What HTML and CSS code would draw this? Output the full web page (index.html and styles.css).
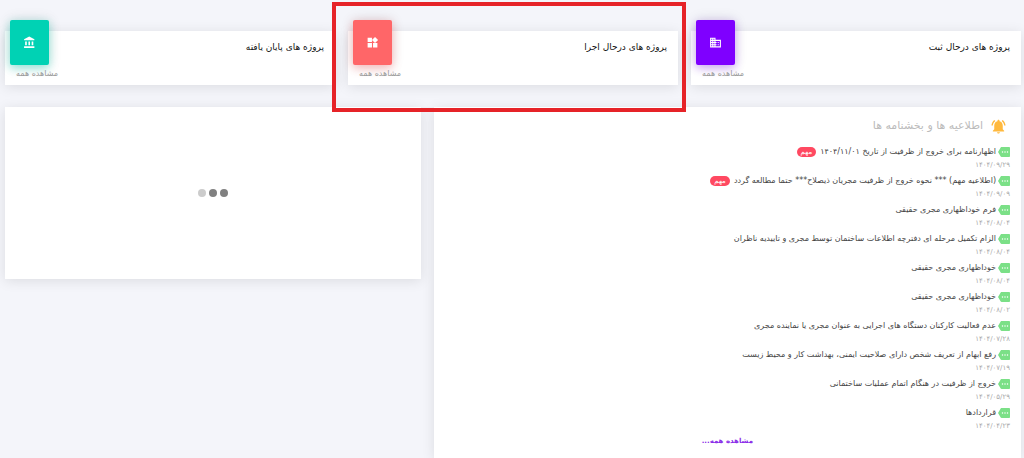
FILE: index.html
```html
<!DOCTYPE html>
<html lang="fa" dir="rtl">
<head>
  <meta charset="UTF-8" />
  <meta name="viewport" content="width=device-width, initial-scale=1.0"/>
  <title>پروژه ها</title>
  <link rel="stylesheet" href="styles.css">
</head>
<body>
  <main class="dashboard">
    <section class="card stat">
      <h2>پروژه های درحال ثبت</h2>
      <div class="stat-side">
        <div class="tile purple">
          <svg viewBox="0 0 24 24"><path d="M12 7V3H2v18h20V7H12zM6 19H4v-2h2v2zm0-4H4v-2h2v2zm0-4H4V9h2v2zm0-4H4V5h2v2zm4 12H8v-2h2v2zm0-4H8v-2h2v2zm0-4H8V9h2v2zm0-4H8V5h2v2zm10 12h-8v-2h2v-2h-2v-2h2v-2h-2V9h8v10zm-2-8h-2v2h2v-2zm0 4h-2v2h2v-2z"/></svg>
        </div>
        <a href="#">مشاهده همه</a>
      </div>
    </section>

    <section class="card stat highlighted">
      <h2>پروژه های درحال اجرا</h2>
      <div class="stat-side">
        <div class="tile red">
          <svg viewBox="0 0 24 24"><path d="M13 13v8h8v-8h-8zM3 21h8v-8H3v8zM3 3v8h8V3H3zm13.66-1.31L11 7.34 16.66 13l5.66-5.66-5.66-5.65z"/></svg>
        </div>
        <a href="#">مشاهده همه</a>
      </div>
    </section>

    <section class="card stat">
      <h2>پروژه های پایان یافته</h2>
      <div class="stat-side">
        <div class="tile green">
          <svg viewBox="0 0 24 24"><path d="M4 10v7h3v-7H4zm6 0v7h3v-7h-3zM2 22h19v-3H2v3zm14-12v7h3v-7h-3zm-4.5-9L2 6v2h19V6l-9.5-5z"/></svg>
        </div>
        <a href="#">مشاهده همه</a>
      </div>
    </section>

    <section class="card news">
      <h3>
        <svg viewBox="0 0 24 24"><path d="M7.58 4.08L6.15 2.65C3.75 4.48 2.17 7.3 2.03 10.5h2c.15-2.65 1.51-4.97 3.55-6.42zm12.39 6.42h2c-.15-3.2-1.73-6.02-4.12-7.85l-1.42 1.43c2.02 1.45 3.39 3.77 3.54 6.42zM18 11c0-3.07-1.64-5.64-4.5-6.32V4c0-.83-.67-1.5-1.5-1.5s-1.5.67-1.5 1.5v.68C7.63 5.36 6 7.92 6 11v5l-2 2v1h16v-1l-2-2v-5zm-6 11c.14 0 .27-.01.4-.04.65-.14 1.18-.58 1.44-1.18.1-.24.15-.5.15-.78h-4c.01 1.1.9 2 2.01 2z"/></svg>
        اطلاعیه ها و بخشنامه ها
      </h3>

      <svg class="hidden">
        <symbol id="more" viewBox="0 0 24 24"><path d="M22 2H7c-.69 0-1.23.35-1.59.88L0 12l5.41 9.11c.36.53.97.89 1.66.89H22c1.1 0 2-.9 2-2V4c0-1.1-.9-2-2-2zM9 13.5a1.5 1.5 0 1 1 0-3 1.5 1.5 0 0 1 0 3zm5 0a1.5 1.5 0 1 1 0-3 1.5 1.5 0 0 1 0 3zm5 0a1.5 1.5 0 1 1 0-3 1.5 1.5 0 0 1 0 3z"/></symbol>
      </svg>

      <ul>
        <li>
          <a href="#"><svg><use href="#more"/></svg>اظهارنامه برای خروج از ظرفیت از تاریخ ۱۴۰۴/۱۱/۰۱ <span class="badge">مهم</span></a>
          <time>۱۴۰۴/۰۹/۲۹</time>
        </li>
        <li>
          <a href="#"><svg><use href="#more"/></svg>(اطلاعیه مهم) *** نحوه خروج از ظرفیت مجریان ذیصلاح*** حتما مطالعه گردد <span class="badge">مهم</span></a>
          <time>۱۴۰۴/۰۹/۰۹</time>
        </li>
        <li>
          <a href="#"><svg><use href="#more"/></svg>فرم خوداظهاری مجری حقیقی</a>
          <time>۱۴۰۴/۰۸/۰۴</time>
        </li>
        <li>
          <a href="#"><svg><use href="#more"/></svg>الزام تکمیل مرحله ای دفترچه اطلاعات ساختمان توسط مجری و تاییدیه ناظران</a>
          <time>۱۴۰۴/۰۸/۰۴</time>
        </li>
        <li>
          <a href="#"><svg><use href="#more"/></svg>خوداظهاری مجری حقیقی</a>
          <time>۱۴۰۴/۰۸/۰۴</time>
        </li>
        <li>
          <a href="#"><svg><use href="#more"/></svg>خوداظهاری مجری حقیقی</a>
          <time>۱۴۰۴/۰۸/۰۲</time>
        </li>
        <li>
          <a href="#"><svg><use href="#more"/></svg>عدم فعالیت کارکنان دستگاه های اجرایی به عنوان مجری یا نماینده مجری</a>
          <time>۱۴۰۴/۰۷/۲۸</time>
        </li>
        <li>
          <a href="#"><svg><use href="#more"/></svg>رفع ابهام از تعریف شخص دارای صلاحیت ایمنی، بهداشت کار و محیط زیست</a>
          <time>۱۴۰۴/۰۷/۱۹</time>
        </li>
        <li>
          <a href="#"><svg><use href="#more"/></svg>خروج از ظرفیت در هنگام اتمام عملیات ساختمانی</a>
          <time>۱۴۰۴/۰۵/۲۹</time>
        </li>
        <li>
          <a href="#"><svg><use href="#more"/></svg>قراردادها</a>
          <time>۱۴۰۴/۰۴/۲۳</time>
        </li>
      </ul>
      <a href="#" class="more-link">مشاهده همه...</a>
    </section>

    <section class="card loading">
      <span class="dot"></span>
      <span class="dot"></span>
      <span class="dot light"></span>
    </section>
  </main>
</body>
</html>
```
FILE: styles.css
```css
* {
  box-sizing: border-box;
}

body {
  margin: 0;
  background: #f4f5fa;
  font-family: 'DejaVu Sans', sans-serif;
  font-size: 8px;
  color: #444;
}

a {
  color: inherit;
  text-decoration: none;
}

h2, h3, ul {
  margin: 0;
  padding: 0;
}

.dashboard {
  display: grid;
  grid-template-columns: repeat(12, 1fr);
  grid-template-rows: auto 1fr;
  align-items: start;
  column-gap: 13px;
  row-gap: 22px;
  min-height: 100vh;
  padding: 31px 3px 0 5px;
}

.card {
  background: white;
  box-shadow: 0 2px 12px rgba(0, 0, 0, 0.1);
}

/* top boxes */
.stat {
  grid-column: span 4;
  display: flex;
  justify-content: space-between;
  height: 54px;
  padding: 0 11px 0 5px;
}

.stat h2 {
  padding-top: 8px;
  font-size: 9px;
  font-weight: normal;
  line-height: 16px;
  color: #111;
}

.stat-side {
  display: flex;
  flex-direction: column;
  align-items: flex-end;
  margin-top: -11px;
}

.stat-side a {
  margin-left: 6px;
  line-height: 18px;
  color: #999;
}

.tile {
  display: flex;
  align-items: center;
  justify-content: center;
  width: 39px;
  height: 45px;
  border-radius: 2px;
}

.tile svg {
  width: 13px;
  height: 13px;
  fill: white;
}

.purple {
  background: #7f00ff;
  box-shadow: 0 3px 10px rgba(127, 0, 255, 0.3), 0 0 14px rgba(0, 0, 0, 0.12);
}

.red {
  background: #ff6668;
  box-shadow: 0 3px 10px rgba(255, 102, 104, 0.4), 0 0 14px rgba(0, 0, 0, 0.12);
}

.green {
  background: #00d2b4;
  box-shadow: 0 3px 10px rgba(0, 210, 180, 0.4), 0 0 14px rgba(0, 0, 0, 0.12);
}

.highlighted {
  position: relative;
}

.highlighted::after {
  content: "";
  position: absolute;
  inset: -29px -8px -27px -16px;
  border: 4px solid #e62328;
  pointer-events: none;
}

/* news list */
.news {
  grid-column: span 7;
  align-self: stretch;
  padding: 10px 11px 8px;
}

.news h3 {
  display: flex;
  align-items: center;
  gap: 7px;
  margin-bottom: 9px;
  padding-right: 3px;
  font-size: 11px;
  font-weight: normal;
  line-height: 18px;
  color: #bbb;
}

.news h3 svg {
  width: 17px;
  height: 17px;
  fill: #ffb93e;
}

.news ul {
  list-style: none;
}

.news li {
  height: 29px;
}

.news li a {
  display: flex;
  align-items: center;
  gap: 2px;
  line-height: 16px;
}

.news li svg {
  width: 12px;
  height: 12px;
  fill: #7be087;
}

.news time {
  display: block;
  font-size: 7px;
  line-height: 10px;
  color: #aaa;
}

.badge {
  margin-right: 2px;
  padding: 0 4px;
  border-radius: 5px;
  background: #ff4961;
  color: white;
  font-size: 7px;
  line-height: 10px;
}

.more-link {
  display: block;
  text-align: center;
  font-size: 7px;
  font-weight: bold;
  line-height: 14px;
  color: #8a2be8;
}

/* loading box */
.loading {
  grid-column: span 5;
  display: flex;
  align-items: center;
  justify-content: center;
  gap: 3px;
  height: 172px;
}

.dot {
  width: 8px;
  height: 8px;
  border-radius: 50%;
  background: #808080;
}

.dot.light {
  background: #ccc;
}

.hidden {
  display: none;
}
```
